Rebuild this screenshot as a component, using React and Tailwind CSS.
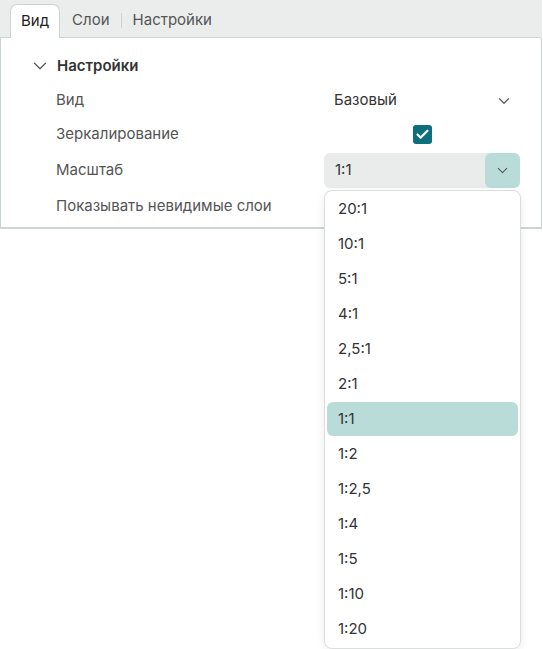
import React from "react";
import { ChevronDown, Check } from "lucide-react";

const scales = ["20:1", "10:1", "5:1", "4:1", "2,5:1", "2:1", "1:1", "1:2", "1:2,5", "1:4", "1:5", "1:10", "1:20"];

const App = () => {
  const selected = "1:1";

  return (
    <div className="w-[543px] h-[649px] bg-white text-[15px] text-[#333]" style={{ fontFamily: "Inter, 'Noto Sans', sans-serif" }}>
      <div className="relative w-[542px]">
        {/* Вкладки */}
        <div className="h-[37px] bg-[#ebedec] flex items-end pl-[10px]">
          <div className="h-[34px] px-[10px] flex items-center bg-white border border-b-0 border-[#c9d6d3] rounded-t-[7px] text-[#222] -mb-px relative z-10">
            Вид
          </div>
          <div className="h-[34px] flex items-center pl-[12px] text-[#555]">
            <span>Слои</span>
            <span className="mx-[11px] w-px h-[15px] bg-[#cfd2d1]"></span>
            <span>Настройки</span>
          </div>
        </div>

        {/* Панель */}
        <div className="h-[192px] bg-white border border-t border-[#c9d6d3] border-b-2 rounded-tr-[3px]">
          <div className="flex items-center h-[24px] mt-[16px] pl-[28px]">
            <ChevronDown size={22} strokeWidth={1.3} className="text-[#555]" />
            <span className="ml-[6px] font-semibold text-[#333]">Настройки</span>
          </div>

          <div className="pl-[55px] pr-[21px] mt-[5px]">
            <div className="flex items-center h-[35px]">
              <span className="w-[268px] text-[#555]">Вид</span>
              <div className="flex-1 flex items-center justify-between pl-[10px] pr-[7px]">
                <span className="text-[#333]">Базовый</span>
                <ChevronDown size={18} strokeWidth={1.5} className="text-[#555]" />
              </div>
            </div>
            <div className="flex items-center h-[33px]">
              <span className="w-[268px] text-[#555]">Зеркалирование</span>
              <div className="flex-1 flex justify-center">
                <span className="w-[19px] h-[19px] rounded-[3px] bg-[#0d6f7b] flex items-center justify-center">
                  <Check size={15} strokeWidth={3.4} className="text-white" />
                </span>
              </div>
            </div>
            <div className="flex items-center h-[38px]">
              <span className="w-[268px] text-[#555]">Масштаб</span>
              <div className="flex-1 h-[35px] rounded-[6px] bg-[#e9ecea] flex items-center justify-between pl-[11px]">
                <span className="text-[#333]">1:1</span>
                <span className="w-[35px] h-[35px] rounded-[6px] bg-[#badcd8] flex items-center justify-center">
                  <ChevronDown size={17} strokeWidth={1.5} className="text-[#555]" />
                </span>
              </div>
            </div>
            <div className="flex items-center h-[35px]">
              <span className="text-[#555]">Показывать невидимые слои</span>
            </div>
          </div>
        </div>

        {/* Выпадающий список */}
        <div className="absolute left-[324px] top-[190px] w-[197px] bg-white border border-[#dcdedd] rounded-[8px] shadow-[0_2px_8px_rgba(0,0,0,0.08)] py-[1px] px-[2px] z-20">
          {scales.map((s) => (
            <div
              key={s}
              className={`h-[34px] mb-px flex items-center pl-[11px] rounded-[6px] text-[#333] ${
                s === selected ? "bg-[#badcd8]" : ""
              }`}
            >
              {s}
            </div>
          ))}
        </div>
      </div>
    </div>
  );
};

export default App;
